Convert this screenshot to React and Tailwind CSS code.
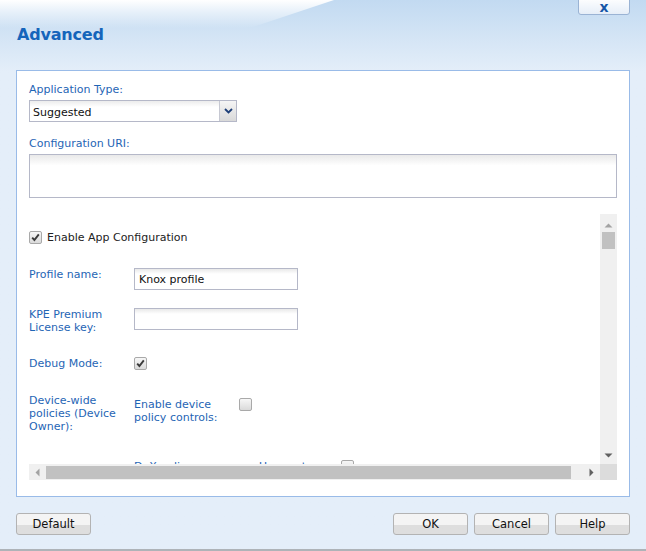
import React from "react";

function Check({ checked }) {
  return (
    <div className="w-[13px] h-[13px] shrink-0 rounded-[2px] border border-[#a9a9a9] bg-linear-to-b from-[#f7f7f7] to-[#dadada] flex items-center justify-center">
      {checked && (
        <svg width="9" height="9" viewBox="0 0 9 9">
          <path d="M1.2 4.6 L3.4 7 L7.8 1.4" stroke="#3a3a3a" strokeWidth="1.9" fill="none" />
        </svg>
      )}
    </div>
  );
}

function TextBox({ children, className = "" }) {
  return (
    <div
      className={
        "border border-[#b5b8c8] bg-linear-to-b from-[#e9e9e9] via-white via-[25%] to-white flex items-center px-[4px] pt-[1px] text-[11px] text-[#111] " +
        className
      }
    >
      {children}
    </div>
  );
}

function Btn({ children }) {
  return (
    <div className="w-[75px] h-[22px] rounded-[3px] border border-[#b3b3b3] bg-linear-to-b from-[#f4f4f4] from-[55%] to-[#dedede] to-[55%] flex items-center justify-center pt-[1px] text-[11.5px] text-[#111]">
      {children}
    </div>
  );
}

export default function App() {
  return (
    <div className="relative w-[646px] h-[551px] overflow-hidden bg-linear-to-b from-[#c2daf1] to-[#e4eef9] to-[13%] font-['DejaVu_Sans',Verdana,sans-serif] border-b-2 border-[#aeb3b8]">
      {/* gloss decoration */}
      <svg className="absolute left-0 top-0" width="340" height="40" viewBox="0 0 340 40">
        <defs>
          <linearGradient id="gl" x1="0" y1="0" x2="0" y2="1">
            <stop offset="0" stopColor="#ffffff" stopOpacity="1" />
            <stop offset="1" stopColor="#ffffff" stopOpacity="0" />
          </linearGradient>
        </defs>
        <path d="M0 0 H334 L256 26 Q250 28 240 28 H0 Z" fill="url(#gl)" />
      </svg>

      {/* close button */}
      <div className="absolute right-[16px] top-[-3px] w-[52px] h-[18px] rounded-b-[3px] border border-[#9ab3d4] bg-linear-to-b from-white to-[#e6eef8] flex items-center justify-center pt-[2px]">
        <span className="text-[14px] font-bold leading-none text-[#1657a8]">x</span>
      </div>

      <div className="relative flex flex-col h-full">
        {/* header */}
        <div className="h-[70px] pl-[17px] pt-[24px]">
          <div className="text-[16px] font-bold text-[#1565bb] leading-[22px] tracking-[-0.2px]">Advanced</div>
        </div>

        {/* panel */}
        <div className="mx-[16px] h-[427px] border border-[#99bbe8] bg-white pl-[12px] pr-[12px] flex flex-col text-[11px] leading-[13px]">
          <div className="pt-[12px] text-[#1f65b5]">Application Type:</div>
          <div className="mt-[4px] w-[208px] h-[22px] flex border border-[#b5b8c8]">
            <div className="flex-1 flex items-center px-[3px] pt-[2px] text-[11px] text-[#111] bg-linear-to-b from-[#ececec] via-white via-[30%] to-white">
              Suggested
            </div>
            <div className="w-[17px] border-l border-[#c6c8d2] bg-linear-to-b from-[#f5f5f5] to-[#d9d9d9] flex items-center justify-center">
              <svg width="9" height="6" viewBox="0 0 9 6">
                <path d="M1 1 L4.5 4.5 L8 1" stroke="#1e3f78" strokeWidth="1.8" fill="none" />
              </svg>
            </div>
          </div>

          <div className="mt-[15px] text-[#1f65b5]">Configuration URI:</div>
          <TextBox className="mt-[4px] h-[44px] w-full" />

          {/* scroll area */}
          <div className="mt-[16px] h-[266px] w-full grid grid-cols-[1fr_17px] grid-rows-[1fr_16px]">
            <div className="overflow-hidden">
              <div className="flex flex-col">
                <div className="mt-[17px] flex items-center gap-[5px]">
                  <Check checked />
                  <span className="text-[#222]">Enable App Configuration</span>
                </div>

                <div className="mt-[24px] flex">
                  <div className="w-[105px] text-[#1f65b5]">Profile name:</div>
                  <TextBox className="w-[164px] h-[22px] pl-[4px]">Knox profile</TextBox>
                </div>

                <div className="mt-[18px] flex">
                  <div className="w-[105px] text-[#1f65b5]">
                    KPE Premium
                    <br />
                    License key:
                  </div>
                  <TextBox className="w-[164px] h-[22px]" />
                </div>

                <div className="mt-[23px] flex items-center">
                  <div className="w-[105px] text-[#1f65b5]">Debug Mode:</div>
                  <Check checked />
                </div>

                <div className="mt-[24px] flex">
                  <div className="w-[105px] text-[#1f65b5]">
                    Device-wide
                    <br />
                    policies (Device
                    <br />
                    Owner):
                  </div>
                  <div className="pt-[4px] w-[105px] text-[#1f65b5]">
                    Enable device
                    <br />
                    policy controls:
                  </div>
                  <div className="pt-[4px]">
                    <Check />
                  </div>
                </div>

                <div className="mt-[27px] flex">
                  <div className="w-[105px]" />
                  <div className="w-[125px] text-[#1f65b5]">DeX policy:</div>
                  <div className="w-[82px] text-[#1f65b5]">Use custom</div>
                  <Check />
                </div>
              </div>
            </div>

            {/* vertical scrollbar */}
            <div className="bg-[#f0f0f0] flex flex-col items-center">
              <svg className="mt-[9px]" width="9" height="5" viewBox="0 0 9 5">
                <path d="M0.5 4.5 L4.5 0.5 L8.5 4.5 Z" fill="#a3a3a3" />
              </svg>
              <div className="mt-[4px] w-[13px] h-[17px] bg-[#c1c1c1]" />
              <div className="flex-1" />
              <svg className="mb-[6px]" width="9" height="5" viewBox="0 0 9 5">
                <path d="M0.5 0.5 L4.5 4.5 L8.5 0.5 Z" fill="#606060" />
              </svg>
            </div>

            {/* horizontal scrollbar */}
            <div className="bg-[#f0f0f0] flex items-center">
              <svg className="ml-[6px]" width="5" height="9" viewBox="0 0 5 9">
                <path d="M4.5 0.5 L0.5 4.5 L4.5 8.5 Z" fill="#a3a3a3" />
              </svg>
              <div className="ml-[6px] w-[525px] h-[13px] bg-[#c1c1c1]" />
              <div className="flex-1" />
              <svg className="mr-[6px]" width="5" height="9" viewBox="0 0 5 9">
                <path d="M0.5 0.5 L4.5 4.5 L0.5 8.5 Z" fill="#606060" />
              </svg>
            </div>
            <div className="bg-[#dcdcdc]" />
          </div>
        </div>

        {/* footer */}
        <div className="mt-[16px] mx-[16px] flex">
          <Btn>Default</Btn>
          <div className="flex-1" />
          <div className="flex gap-[6px]">
            <Btn>OK</Btn>
            <Btn>Cancel</Btn>
            <Btn>Help</Btn>
          </div>
        </div>
      </div>
    </div>
  );
}
